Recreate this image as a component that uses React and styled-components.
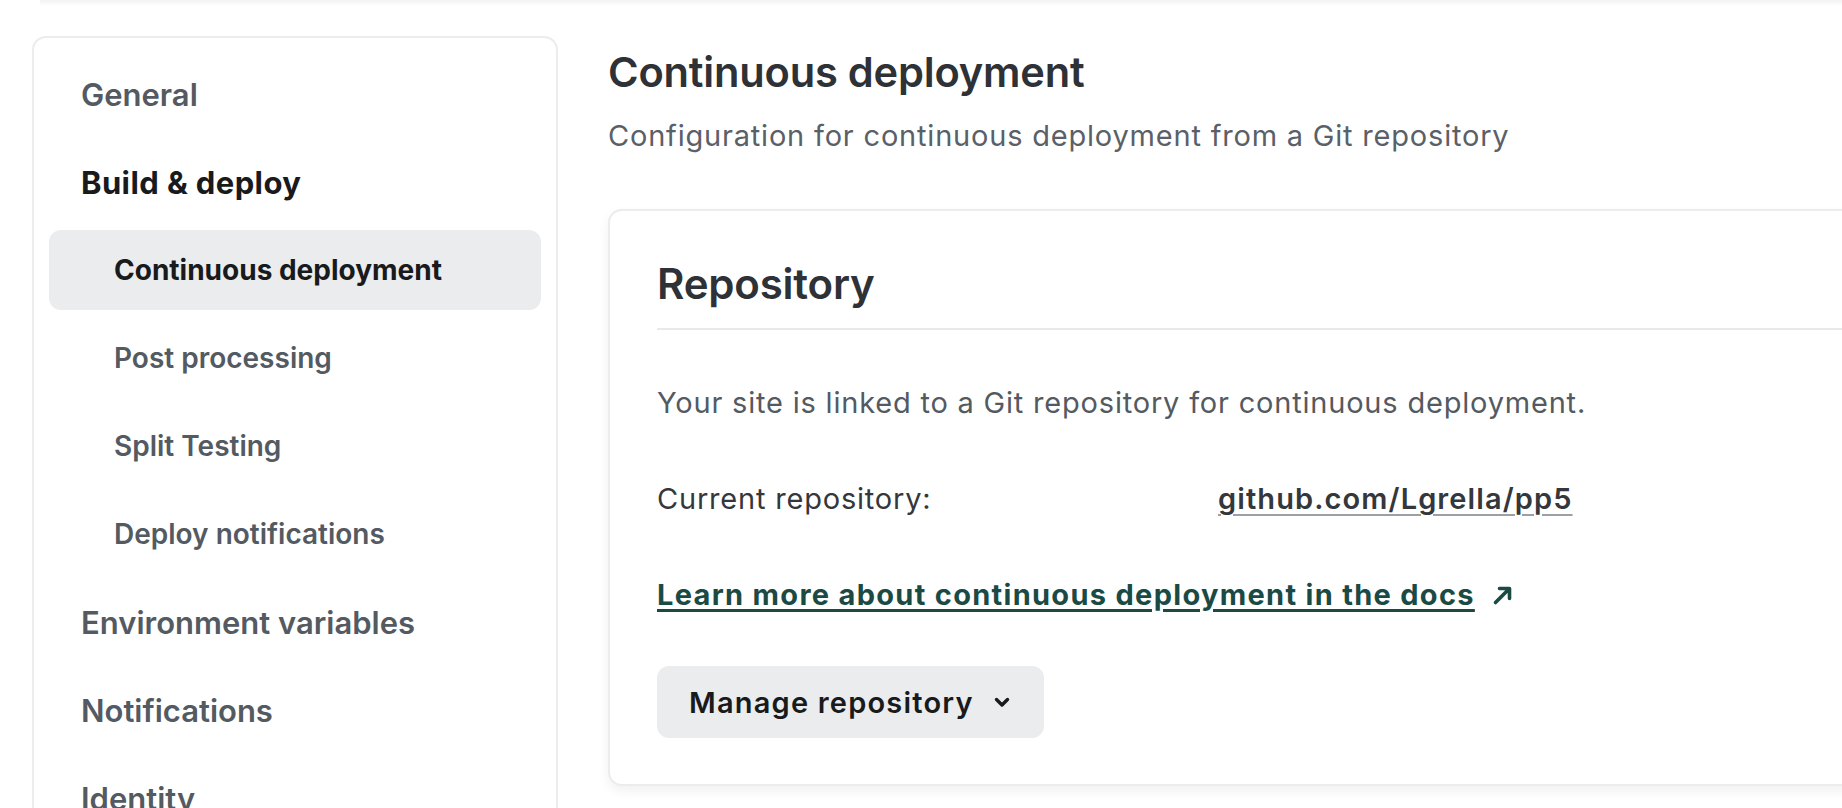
import React from "react";
import styled, { createGlobalStyle } from "styled-components";

const GlobalStyle = createGlobalStyle`
  html, body {
    margin: 0;
    padding: 0;
    background: #ffffff;
    overflow: hidden;
  }
  body {
    font-family: Inter, "Noto Sans", "Liberation Sans", sans-serif;
    -webkit-font-smoothing: antialiased;
  }
  * {
    box-sizing: border-box;
  }
`;

const navItems = [
  { label: "General" },
  {
    label: "Build & deploy",
    open: true,
    children: [
      { label: "Continuous deployment", active: true },
      { label: "Post processing" },
      { label: "Split Testing" },
      { label: "Deploy notifications" },
    ],
  },
  { label: "Environment variables" },
  { label: "Notifications" },
  { label: "Identity" },
  { label: "Forms" },
  { label: "Functions" },
];

const ArrowUpRight = () => (
  <svg width="22" height="22" viewBox="0 0 22 22" fill="none">
    <path
      d="M3.5 18.5L17 5M7.5 4.5H17.5V14.5"
      stroke="currentColor"
      strokeWidth="3.6"
      strokeLinecap="round"
      strokeLinejoin="round"
    />
  </svg>
);

const ChevronDown = () => (
  <svg width="16" height="11" viewBox="0 0 16 11" fill="none">
    <path
      d="M2.5 2.5L8 8L13.5 2.5"
      stroke="currentColor"
      strokeWidth="3.4"
      strokeLinecap="round"
      strokeLinejoin="round"
    />
  </svg>
);

const App = () => {
  return (
    <>
      <GlobalStyle />
      <TopShade />
      <Page>
        <Sidebar>
          <Nav>
            {navItems.map((item) => (
              <React.Fragment key={item.label}>
                <NavItem $open={item.open}>{item.label}</NavItem>
                {item.children &&
                  item.children.map((child) => (
                    <SubItem key={child.label} $active={child.active}>
                      {child.label}
                    </SubItem>
                  ))}
              </React.Fragment>
            ))}
          </Nav>
        </Sidebar>

        <Main>
          <PageTitle>Continuous deployment</PageTitle>
          <PageSubtitle>
            Configuration for continuous deployment from a Git repository
          </PageSubtitle>

          <Card>
            <CardHeader>
              <CardTitle>Repository</CardTitle>
            </CardHeader>
            <CardBody>
              <Text>
                Your site is linked to a Git repository for continuous
                deployment.
              </Text>
              <InfoRow>
                <Label>Current repository:</Label>
                <RepoLink href="#">github.com/Lgrella/pp5</RepoLink>
              </InfoRow>
              <DocsLink href="#">
                <span>Learn more about continuous deployment in the docs</span>
                <ArrowUpRight />
              </DocsLink>
              <Button>
                Manage repository
                <ChevronDown />
              </Button>
            </CardBody>
          </Card>
        </Main>
      </Page>
    </>
  );
};

export default App;

const TopShade = styled.div`
  height: 6px;
  margin-left: 40px;
  background: linear-gradient(#f2f2f3, #ffffff);
`;

const Page = styled.div`
  display: flex;
  align-items: flex-start;
  gap: 50px;
  padding: 30px 0 0 32px;
  width: 2600px;
`;

const Sidebar = styled.aside`
  flex: 0 0 526px;
  border: 2px solid #ececed;
  border-radius: 14px;
  background: #ffffff;
  padding: 16px 15px;
`;

const Nav = styled.nav`
  display: flex;
  flex-direction: column;
  gap: 8px;
`;

const NavItem = styled.a`
  display: flex;
  align-items: center;
  height: 80px;
  padding-left: 32px;
  border-radius: 12px;
  font-size: 31px;
  font-weight: ${({ $open }) => ($open ? 700 : 600)};
  letter-spacing: ${({ $open }) => ($open ? "0.4px" : "0")};
  color: ${({ $open }) => ($open ? "#181a1c" : "#545a61")};
  cursor: pointer;
`;

const SubItem = styled.a`
  display: flex;
  align-items: center;
  height: 80px;
  padding-left: 65px;
  border-radius: 12px;
  font-size: 28px;
  font-weight: ${({ $active }) => ($active ? 700 : 600)};
  color: ${({ $active }) => ($active ? "#181a1c" : "#545a61")};
  background: ${({ $active }) => ($active ? "#ebecee" : "transparent")};
  cursor: pointer;
`;

const Main = styled.main`
  flex: 0 0 1600px;
  padding-top: 12px;
`;

const PageTitle = styled.h1`
  margin: 0;
  font-size: 41.6px;
  line-height: 48px;
  font-weight: 600;
  color: #2e3136;
  letter-spacing: -0.2px;
`;

const PageSubtitle = styled.p`
  margin: 20px 0 0;
  font-size: 29px;
  line-height: 40px;
  font-weight: 400;
  letter-spacing: 0.8px;
  color: #5a6068;
`;

const Card = styled.section`
  margin-top: 53px;
  border: 2px solid #ececed;
  border-radius: 14px;
  background: #ffffff;
  box-shadow: 0 5px 12px rgba(0, 0, 0, 0.06);
  padding: 0 0 46px 47px;
`;

const CardHeader = styled.header`
  padding: 49px 0 20px;
  border-bottom: 2px solid #e9e9eb;
`;

const CardTitle = styled.h2`
  margin: 0;
  font-size: 42px;
  line-height: 48px;
  font-weight: 600;
  color: #2e3136;
  letter-spacing: -0.2px;
`;

const CardBody = styled.div`
  display: flex;
  flex-direction: column;
  align-items: flex-start;
  padding-top: 53px;
  font-size: 29px;
  line-height: 40px;
`;

const Text = styled.p`
  margin: 0;
  letter-spacing: 0.8px;
  color: #545a61;
`;

const InfoRow = styled.div`
  display: grid;
  grid-template-columns: 561px auto;
  margin-top: 56px;
  letter-spacing: 0.8px;
`;

const Label = styled.span`
  color: #34373b;
`;

const RepoLink = styled.a`
  color: #34373b;
  font-weight: 600;
  letter-spacing: 1.1px;
  text-decoration: underline;
  text-decoration-color: #9aa0a6;
  text-decoration-thickness: 2px;
  text-underline-offset: 5px;
`;

const DocsLink = styled.a`
  display: inline-flex;
  align-items: center;
  gap: 17px;
  margin-top: 56px;
  font-weight: 700;
  letter-spacing: 1.3px;
  color: #1b4a45;
  text-decoration: none;

  span {
    text-decoration: underline;
    text-decoration-thickness: 2.5px;
    text-underline-offset: 4px;
  }
`;

const Button = styled.button`
  display: inline-flex;
  align-items: center;
  gap: 20px;
  height: 72px;
  margin-top: 51px;
  padding: 0 34px 0 32px;
  border: none;
  border-radius: 12px;
  background: #ebecee;
  font-family: inherit;
  font-size: 29px;
  font-weight: 600;
  letter-spacing: 1.2px;
  color: #181a1c;
  cursor: pointer;
`;
